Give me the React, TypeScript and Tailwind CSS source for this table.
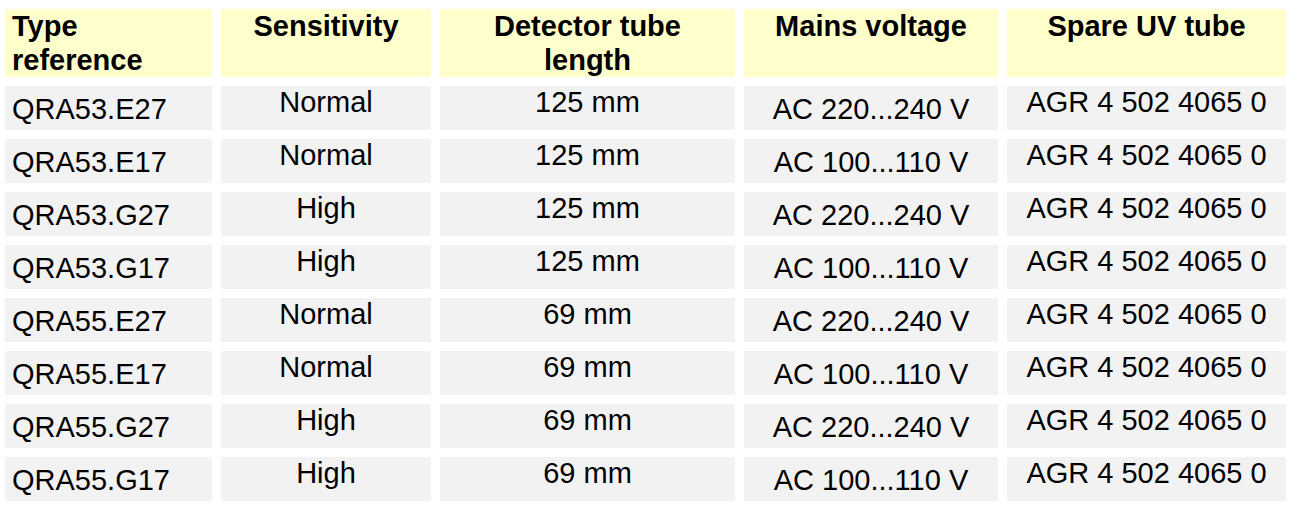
const rows = [
  ["QRA53.E27", "Normal", "125 mm", "AC 220...240 V"],
  ["QRA53.E17", "Normal", "125 mm", "AC 100...110 V"],
  ["QRA53.G27", "High", "125 mm", "AC 220...240 V"],
  ["QRA53.G17", "High", "125 mm", "AC 100...110 V"],
  ["QRA55.E27", "Normal", "69 mm", "AC 220...240 V"],
  ["QRA55.E17", "Normal", "69 mm", "AC 100...110 V"],
  ["QRA55.G27", "High", "69 mm", "AC 220...240 V"],
  ["QRA55.G17", "High", "69 mm", "AC 100...110 V"],
];

const spare = "AGR 4 502 4065 0";

export default function App() {
  return (
    <div
      className="w-[1294px] h-[508px] bg-white pl-[5px] pt-[9px] text-black text-[29px]"
      style={{ fontFamily: '"Liberation Sans", Arial, sans-serif' }}
    >
      <div className="grid grid-cols-[207px_210px_295px_254px_279px] grid-rows-[68px_repeat(8,44px)] gap-x-[9px] gap-y-[9px]">
        <div className="bg-[#ffffcc] pl-[7px] font-bold leading-[34px]">
          Type
          <br />
          reference
        </div>
        <div className="bg-[#ffffcc] text-center font-bold leading-[34px]">Sensitivity</div>
        <div className="bg-[#ffffcc] text-center font-bold leading-[34px]">
          Detector tube
          <br />
          length
        </div>
        <div className="bg-[#ffffcc] text-center font-bold leading-[34px]">Mains voltage</div>
        <div className="bg-[#ffffcc] text-center font-bold leading-[34px]">Spare UV tube</div>

        {rows.map((r) => (
          <div key={r[0]} className="contents">
            <div className="bg-[#f2f2f2] pl-[7px] pt-[7px] leading-[33px] whitespace-nowrap">{r[0]}</div>
            <div className="bg-[#f2f2f2] text-center leading-[33px] whitespace-nowrap">{r[1]}</div>
            <div className="bg-[#f2f2f2] text-center leading-[33px] whitespace-nowrap">{r[2]}</div>
            <div className="bg-[#f2f2f2] text-center pt-[7px] leading-[33px] whitespace-nowrap">{r[3]}</div>
            <div className="bg-[#f2f2f2] text-center leading-[33px] whitespace-nowrap">{spare}</div>
          </div>
        ))}
      </div>
    </div>
  );
}
